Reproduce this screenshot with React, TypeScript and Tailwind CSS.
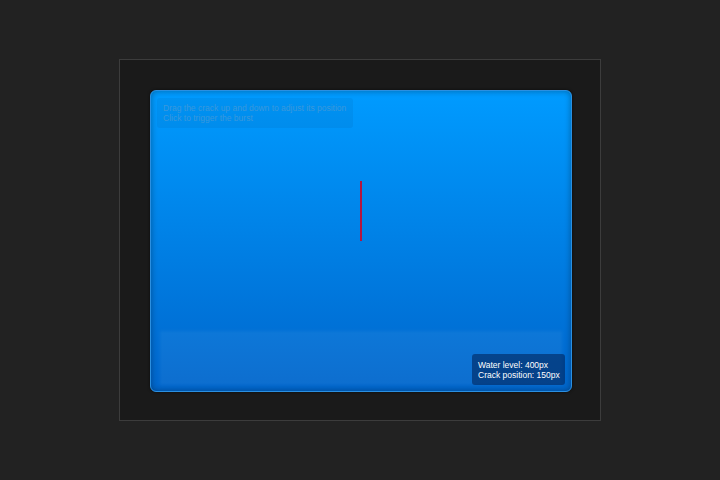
import React from "react";

export default function App() {
  return (
    <div
      className="w-[720px] h-[480px] bg-[#222222] flex items-center justify-center"
      style={{ fontFamily: '"Liberation Sans", Arial, sans-serif' }}
    >
      <div className="w-[482px] h-[362px] border border-[#3c3c3c] bg-[#1a1a1a] flex items-start justify-start pl-[30px] pt-[30px]">
        {/* dam wall holding the water */}
        <div className="relative flex flex-col justify-between w-[422px] h-[302px] p-[6px] rounded-[6px] border border-[#2b8fe0] bg-gradient-to-b from-[#009bff] to-[#0066cc] shadow-[inset_0_0_6px_rgba(0,0,0,0.35),0_0_3px_rgba(0,0,0,0.6)] overflow-hidden">
          {/* water surface band */}
          <div className="absolute left-[9px] right-[9px] top-[240px] bottom-[6px] bg-white/[0.05] blur-[1.5px]" />

          {/* crack, placed by its position on the wall */}
          <div className="absolute left-[209px] top-[90px] w-[1.5px] h-[60px] bg-[#b4163f]" />

          {/* instructions */}
          <div className="relative self-start mt-[1px] w-[196px] h-[30px] rounded-[3px] bg-[rgba(0,40,90,0.07)] px-[6px] pt-[5px] text-[8.5px] leading-[10px] text-[#3a98dc] whitespace-nowrap">
            <div>Drag the crack up and down to adjust its position</div>
            <div>Click to trigger the burst</div>
          </div>

          {/* status readout */}
          <div className="relative self-end w-[93px] h-[31px] rounded-[3px] bg-[rgba(0,30,80,0.55)] px-[6px] pt-[5.5px] text-[8.5px] leading-[10px] text-white whitespace-nowrap">
            <div>Water level: 400px</div>
            <div>Crack position: 150px</div>
          </div>
        </div>
      </div>
    </div>
  );
}
